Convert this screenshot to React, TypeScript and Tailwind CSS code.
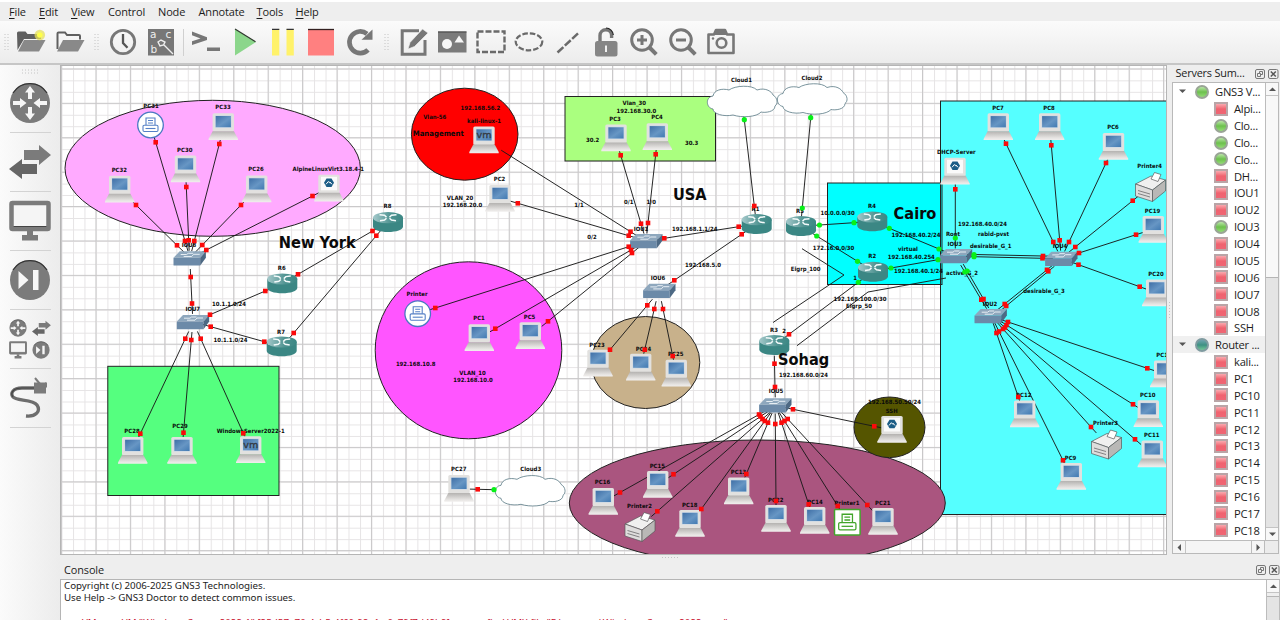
import React from "react";

type P = { x: number; y: number };

/* ---------- Topology data ---------- */
type Kind = "pc" | "vm" | "alpine";
const laptops: [number, number, Kind, string, number, number][] = [
  [119.7, 175.7, "pc", "PC32", 119.3, 172.3],
  [185.5, 155.5, "pc", "PC30", 184.7, 151.7],
  [223.3, 113.2, "pc", "PC33", 223, 108.8],
  [256.7, 175.5, "pc", "PC26", 256, 171.4],
  [329, 174.8, "alpine", "AlpineLinuxVirt3.18.4-1", 328.3, 170.5],
  [484, 126.5, "vm", "kali-linux-1", 484, 122.8],
  [500, 185, "pc", "PC2", 499.5, 180.9],
  [616, 124.5, "pc", "PC3", 615, 121],
  [657.3, 123.3, "pc", "PC4", 657, 119],
  [955, 157.8, "alpine", "DHCP-Server", 956.3, 153.8],
  [998.3, 113.3, "pc", "PC7", 998, 109.6],
  [1049.7, 113.3, "pc", "PC8", 1049, 109.6],
  [1113.5, 133, "pc", "PC6", 1113, 129.2],
  [1153.3, 216, "pc", "PC19", 1152.5, 212.8],
  [1156.7, 279.5, "pc", "PC20", 1156, 275.5],
  [132.7, 437, "pc", "PC28", 132, 432.8],
  [182, 437, "pc", "PC29", 180, 428],
  [250.7, 436.3, "vm", "WindowsServer2022-1", 250.7, 432.8],
  [479.3, 324.2, "pc", "PC1", 479, 320.4],
  [530.3, 322.2, "pc", "PC5", 529.5, 318.7],
  [598, 349.8, "pc", "PC23", 597, 346.7],
  [640.7, 353.8, "pc", "PC24", 643.5, 351],
  [676.3, 359.8, "pc", "PC25", 675.7, 356],
  [459, 475, "pc", "PC27", 458.7, 471],
  [603.3, 488, "pc", "PC16", 602.5, 484.4],
  [657.7, 471, "pc", "PC15", 657.3, 467.5],
  [690, 510, "pc", "PC18", 689.7, 507],
  [738.7, 477.5, "pc", "PC13", 738.5, 474],
  [776, 505, "pc", "PC22", 775.7, 502.3],
  [814.7, 507, "pc", "PC14", 815, 504],
  [883, 508, "pc", "PC21", 882.7, 504.8],
  [892, 416, "alpine", "SSH", 891.7, 413],
  [1024.7, 400.5, "pc", "PC12", 1023.7, 397],
  [1071.3, 463, "pc", "PC9", 1070.5, 459.8],
  [1148.3, 400.3, "pc", "PC10", 1147.7, 396.9],
  [1152.3, 440.5, "pc", "PC11", 1151.7, 437.4],
  [1164.7, 360.5, "pc", "PC17", 1164, 357],
];

const routers: [number, number, string, number, number][] = [
  [388, 222, "R8", 387.5, 207.9],
  [282.3, 283.3, "R6", 281.7, 269.8],
  [281.7, 346.3, "R7", 281, 333.7],
  [756.7, 224, "R1", 755.5, 211],
  [801, 226, "R5", 800, 213],
  [872.3, 221.3, "R4", 872, 208],
  [873, 271.7, "R2", 872.3, 257.6],
  [774.3, 345, "R3", 774, 332],
];

const switches: [number, number, string, number, number][] = [
  [189.7, 258.3, "IOU8", 189, 247.3],
  [193, 322, "IOU7", 192.7, 311.3],
  [646.3, 241, "IOU1", 641, 230.8],
  [659.3, 290.7, "IOU6", 658, 280.2],
  [956, 256, "IOU3", 954.7, 245.7],
  [1061.3, 258.7, "IOU4", 1060, 248],
  [990.7, 316, "IOU2", 990, 305.5],
  [775.3, 405.3, "IOU5", 776, 392.8],
];

type End = "r" | "g" | "";
const links: [number, number, number, number, End, End][] = [
  [155.7, 142.3, 185, 241, "r", "r"],
  [186.3, 187, 188.7, 240.3, "r", "r"],
  [219.3, 144, 194.3, 241, "r", "r"],
  [136, 205, 177, 245.3, "r", "r"],
  [241, 205, 202.3, 245, "r", "r"],
  [312.5, 196, 206.3, 250, "r", "r"],
  [190.7, 277, 192, 303.5, "r", "r"],
  [210, 314.7, 265.3, 291, "r", "r"],
  [210.7, 326.7, 264.3, 341.7, "r", "r"],
  [185.3, 338.7, 140.3, 433.7, "r", "r"],
  [191.3, 340, 183.5, 432.7, "r", "r"],
  [200.7, 338.7, 243.3, 433.3, "r", "r"],
  [298, 274.3, 372.5, 231, "r", "r"],
  [293.7, 333, 376.3, 235.7, "r", "r"],
  [508, 154.5, 630.5, 231.7, "", "r"],
  [517.8, 203.3, 628.7, 235.7, "r", "r"],
  [435.3, 308, 628.7, 246.7, "r", "r"],
  [495.3, 328.7, 631, 250, "r", "r"],
  [548, 321.3, 632, 253, "r", "r"],
  [620.7, 155.3, 641, 223.7, "r", "r"],
  [655.7, 154.3, 648, 223, "r", "r"],
  [664.3, 238.3, 738.7, 226.7, "r", "r"],
  [741.7, 234.3, 674.3, 280.3, "r", "r"],
  [744.3, 119.7, 754.3, 206, "g", "r"],
  [647.3, 305.3, 610, 349.7, "r", "r"],
  [654.3, 309, 644.7, 349.7, "r", "r"],
  [663, 309, 672.7, 356, "r", "r"],
  [810.7, 117.7, 802.3, 208, "g", "g"],
  [819.5, 225, 854, 222.7, "g", "g"],
  [816.7, 236, 857.5, 261.3, "g", "g"],
  [858.3, 282.3, 789, 334.3, "g", "r"],
  [889.3, 228.3, 939, 249, "g", "g"],
  [891, 268, 938, 259.7, "g", "g"],
  [955.3, 189.3, 955.3, 238, "r", "g"],
  [974, 254.5, 1043, 256, "g", "r"],
  [974, 256.7, 1042.5, 258.3, "g", "r"],
  [964.8, 272, 981.3, 299.7, "g", "r"],
  [967.2, 271, 983.5, 299, "g", "r"],
  [1047, 269.8, 1004.7, 304, "r", "r"],
  [1048.3, 271.3, 1006.2, 306, "r", "r"],
  [1006, 143.7, 1053.3, 242, "r", "r"],
  [1051.3, 145.3, 1059.7, 240.3, "r", "r"],
  [1106, 163, 1069, 242, "r", "r"],
  [1132.7, 200.7, 1075.3, 247, "r", "r"],
  [1136, 234.7, 1079, 253, "r", "r"],
  [1139.7, 286.7, 1078.5, 264.7, "r", "r"],
  [1147.3, 368.3, 1008, 322, "r", "r"],
  [1133, 404.3, 1006.5, 325, "r", "r"],
  [1135, 439.3, 1005, 327.5, "r", "r"],
  [1091, 427, 1003, 329, "r", "r"],
  [1063, 460.3, 999, 331.5, "r", "r"],
  [1018.3, 397, 996.5, 333, "r", "r"],
  [774.5, 363.7, 775, 387, "r", "r"],
  [793, 409.3, 874.3, 426.3, "r", "r"],
  [620, 492.5, 759, 414.5, "r", "r"],
  [673.5, 474.3, 760.5, 416.5, "r", "r"],
  [657.3, 511.3, 762.5, 419, "r", "r"],
  [701.3, 509, 764.8, 421, "r", "r"],
  [746.3, 474, 768, 422.7, "r", "r"],
  [776, 501, 775.3, 424, "r", "r"],
  [808.7, 504.3, 781.5, 422.7, "r", "r"],
  [837.7, 506, 784.5, 421, "r", "r"],
  [867.3, 505, 787.7, 419, "r", "r"],
  [477.7, 489.3, 494, 489.7, "r", "g"],
];

const notes: [number, number, string, number?][] = [
  [480.3, 109.8, "192.168.56.2"],
  [434.7, 118.9, "Vlan-56"],
  [438.3, 136, "Management", 7.5],
  [460, 199.7, "VLAN_20"],
  [462.5, 207, "192.168.20.0"],
  [634.3, 105.2, "Vlan_30"],
  [636.3, 112.8, "192.168.30.0"],
  [592.7, 141.7, "30.2"],
  [691.5, 145.3, "30.3"],
  [579, 207, "1/1"],
  [592, 239, "0/2"],
  [628.7, 203.5, "0/1"],
  [651.3, 204.3, "1/0"],
  [694.7, 230.7, "192.168.1.1/24"],
  [703, 267, "192.168.5.0"],
  [741.5, 81.7, "Cloud1"],
  [812, 79.9, "Cloud2"],
  [530.7, 471, "Cloud3"],
  [229, 306.3, "10.1.1.0/24"],
  [230.5, 342, "10.1.1.0/24"],
  [837.7, 215, "10.0.0.0/30"],
  [833.5, 250.3, "172.16.0.0/30"],
  [805.7, 271, "Eigrp_100"],
  [916, 237, "192.168.40.2/24"],
  [908, 251.3, "virtual"],
  [911.3, 258.8, "192.168.40.254"],
  [918.5, 272.7, "192.168.40.1/24"],
  [855, 280.3, "1"],
  [784, 333, "2"],
  [860, 301, "192.168.100.0/30"],
  [859, 308.3, "Eigrp_50"],
  [953, 236, "Root"],
  [993.5, 236, "rabid-pvst"],
  [982.5, 225.7, "192.168.40.0/24"],
  [990.7, 248.3, "desirable_G_1"],
  [962, 274.5, "active_G_2"],
  [1044, 293.3, "desirable_G_3"],
  [803.5, 376.8, "192.168.60.0/24"],
  [894.5, 404, "192.168.50.50/24"],
  [415.7, 366.3, "192.168.10.8"],
  [472.5, 375, "VLAN_10"],
  [473, 382.3, "192.168.10.0"],
  [151, 108.2, "PC31"],
  [417, 296.3, "Printer"],
  [639.5, 508, "Printer2"],
  [847, 505.2, "Printer1"],
  [1149.7, 168, "Printer4"],
  [1105.5, 425.3, "Printer3"],
  [317.3, 247.5, "New York", 15.8],
  [689.8, 200.3, "USA", 15.8],
  [915, 219, "Cairo", 15.8],
  [803.7, 365, "Sohag", 15.8],
];

/* ---------- Canvas drawing parts ---------- */
function Note({ x, y, text, size = 5.8 }: P & { text: string; size?: number }) {
  return (
    <text transform={`translate(${x} ${y}) scale(.925 1)`} textAnchor="middle" fontSize={size} fill="#0a0a0a">
      {text}
    </text>
  );
}

function Laptop({ x, y, kind }: P & { kind: Kind }) {
  return (
    <g transform={`translate(${x} ${y})`}>
      <rect x="-10.7" y="0" width="21.4" height="18.5" rx="1.6" fill="#e2e1df" />
      <path d="M-10.7 18h21.4l4 7.6v1.2h-29.4v-1.2z" fill="url(#base)" />
      {kind === "alpine" ? (
        <>
          <rect x="-8" y="2" width="16" height="13.5" fill="#fafafa" />
          <path d="M-2.5 3.8h5l2.5 4.2-2.5 4.3h-5L-5 8z" fill="#1c5d86" />
          <path d="M-3 9.5 -.6 6.7 1 8.5M.8 7 3 9.5" stroke="#fff" strokeWidth="1" fill="none" />
        </>
      ) : (
        <>
          <rect x="-8.2" y="2.2" width="16.4" height="12.4" fill="#c9d8e6" />
          <rect x="-7.6" y="2.8" width="15.2" height="11.2" fill="url(#screen)" />
        </>
      )}
      {kind === "vm" && (
        <text x="0" y="11.8" textAnchor="middle" fontSize="9.5" fontWeight="400" fill="#333a44" stroke="#333a44" strokeWidth=".35">
          vm
        </text>
      )}
    </g>
  );
}

function Router({ x, y }: P) {
  return (
    <g transform={`translate(${x} ${y})`}>
      <path d="M-15-4.5v9C-15 7.8-8.3 10-0 10s15-2.2 15-5.5v-9z" fill="#3b8784" />
      <ellipse cy="-4.3" rx="15" ry="5.6" fill="url(#rtop)" />
      <path
        d="M-8.5-7.2-3.5-6.7-1.5-4.7M8.500-7.2 3.5-6.7 1.5-4.7M-8-1.2-3.5-2 -1.5-3.8M8-1.2 3.5-2 1.5-3.8"
        stroke="#f4fbfb"
        strokeWidth="1.5"
        fill="none"
      />
    </g>
  );
}

function Switch({ x, y }: P) {
  return (
    <g transform={`translate(${x} ${y})`}>
      <path d="M-16.2-.5-10-7h26.2L10.5-.5z" fill="#8ea7bd" />
      <path d="M-16.2-.5h26.7v7.8h-26.2q-.5 0-.5-.5z" fill="#6c8aa8" />
      <path d="M10.5-.5 16.2-7v6.5L10.5 7.3z" fill="#4d6984" />
      <path d="M-9-3.8h6l1.5-1.2h5M-6-1.8h8l2-2.2h6" stroke="#e7eef4" strokeWidth="1" fill="none" />
    </g>
  );
}

function Cloud({ x, y }: P) {
  return (
    <path
      transform={`translate(${x} ${y})`}
      d="M6 10C7 4 15 2 22 4 28-.5 45-1.5 50 4 59 1 65 6 66 9 71 12 71 18 68 20 68 26 58 27 54 26 50 31 35 32 26 29 17 31 6 28 6 23-1 22-2 11 6 10z"
      fill="#fff"
      stroke="#587984"
      strokeWidth=".8"
    />
  );
}

function PrinterGlyph({ color }: { color: string }) {
  return (
    <g fill="none" stroke={color} strokeWidth="1.1">
      <path d="M-4.5 0v-7h9v7M-2.5-4.5h5M-2.5-2h5" />
      <rect x="-7.5" y=".2" width="15" height="6.3" rx="1.2" />
      <path d="M-5 3.5h10" />
    </g>
  );
}

function LaserPrinter({ x, y }: P) {
  return (
    <g transform={`translate(${x} ${y})`} stroke="#59595a" strokeWidth=".7" strokeLinejoin="round">
      <path d="M.5 12 16 4l14.5 4-13 10z" fill="#f0f0ef" />
      <path d="M.5 12 17.5 18v11.5L.5 24z" fill="#dedddc" />
      <path d="M17.5 18 30.5 8v11l-13 10.5z" fill="#b9b8b6" />
      <path d="M16 7 19.5.5 26 2.5 23 9.5z" fill="#fff" />
      <path d="M3 18.5l12 3.5M3 21.5l12 3.5" fill="none" />
    </g>
  );
}

function Marker({ x, y, t }: P & { t: End }) {
  if (!t) return null;
  return t === "r" ? (
    <rect x={x - 2.3} y={y - 2.3} width="4.6" height="4.6" fill="#fb0a0a" />
  ) : (
    <circle cx={x} cy={y} r="2.6" fill="#08f018" />
  );
}

function Topology() {
  return (
    <svg
      width="1105"
      height="488"
      viewBox="61 66 1105 488"
      className="block font-bold"
      style={{ fontFamily: '"DejaVu Sans", Verdana, sans-serif' }}
    >
      <defs>
        <linearGradient id="base" x1="0" y1="0" x2="0" y2="1">
          <stop offset="0" stopColor="#b4b2b0" />
          <stop offset=".75" stopColor="#e6e4e2" />
          <stop offset="1" stopColor="#f1efee" />
        </linearGradient>
        <linearGradient id="screen" x1="0" y1="0" x2="1" y2="1">
          <stop offset="0" stopColor="#3f6fa6" />
          <stop offset=".55" stopColor="#6796c4" />
          <stop offset="1" stopColor="#427ab2" />
        </linearGradient>
        <linearGradient id="rtop" x1="0" y1="0" x2="1" y2="0">
          <stop offset="0" stopColor="#a5c9cb" />
          <stop offset=".6" stopColor="#4f9391" />
          <stop offset="1" stopColor="#3b8784" />
        </linearGradient>
        <pattern id="minor" x="61.5" y="68.9" width="11.48" height="11.47" patternUnits="userSpaceOnUse">
          <path d="M0 .5H11.48M.5 0V11.47" stroke="#e6e4e5" strokeWidth="1" fill="none" />
        </pattern>
        <pattern id="major" x="61" y="68.4" width="34.44" height="34.41" patternUnits="userSpaceOnUse">
          <path d="M0 .5H34.44M.5 0V34.41" stroke="#c9c8c9" strokeWidth="1" fill="none" />
        </pattern>
      </defs>
      <rect x="61" y="66" width="1105" height="488" fill="#fff" />
      <rect x="61" y="66" width="1105" height="488" fill="url(#minor)" />
      <rect x="61" y="66" width="1105" height="488" fill="url(#major)" />

      <g stroke="#222" strokeWidth="1">
        <ellipse cx="212.7" cy="168.3" rx="147.7" ry="68" fill="#ffaaff" />
        <ellipse cx="464.7" cy="134.2" rx="53.3" ry="46" fill="#ff0000" />
        <rect x="565" y="96.5" width="150.5" height="64.5" fill="#aaff7f" />
        <ellipse cx="468.5" cy="350.3" rx="93.3" ry="88.5" fill="#ff55ff" />
        <ellipse cx="645.5" cy="362.5" rx="54.3" ry="46" fill="#c8b18b" />
        <rect x="940.5" y="101" width="240" height="413.5" fill="#55ffff" />
        <ellipse cx="757.3" cy="503" rx="188" ry="63" fill="#aa557f" />
        <ellipse cx="889.5" cy="427.3" rx="35.5" ry="30.3" fill="#555500" />
        <rect x="827.5" y="183" width="114.5" height="101.5" fill="#00ffff" />
        <path d="M940.5 183V285" />
        <rect x="107.8" y="366.3" width="171.2" height="129.2" fill="#55ff7f" />
      </g>

      <g stroke="#1a1a1a" strokeWidth=".95" fill="none">
        {links.map(([x1, y1, x2, y2], i) => {
          const d = Math.hypot(x2 - x1, y2 - y1);
          const ux = ((x2 - x1) / d) * 8;
          const uy = ((y2 - y1) / d) * 8;
          return <line key={i} x1={x1 - ux} y1={y1 - uy} x2={x2 + ux * 1.3} y2={y2 + uy * 1.3} />;
        })}
        <path d="M802 248.7 844 275 773 322.5M797 345.7 868 292 946 278" />
      </g>

      <Cloud x={707} y={86} />
      <Cloud x={777} y={83.5} />
      <Cloud x={495} y={475.3} />
      {routers.map(([x, y], i) => (
        <Router key={i} x={x} y={y} />
      ))}
      {switches.map(([x, y], i) => (
        <Switch key={i} x={x} y={y} />
      ))}
      {laptops.map(([x, y, kind], i) => (
        <Laptop key={i} x={x} y={y} kind={kind} />
      ))}
      {[
        [150.5, 125],
        [417.7, 313.7],
      ].map(([x, y]) => (
        <g key={x} transform={`translate(${x} ${y})`}>
          <circle r="12.8" fill="#fff" stroke="#4a78c2" strokeWidth="1.3" />
          <PrinterGlyph color="#5580c6" />
        </g>
      ))}
      <g transform="translate(847.3 522.3)">
        <rect x="-12.8" y="-12.8" width="25.6" height="25.6" rx="1" fill="#fff" stroke="#42a52b" strokeWidth="1.5" />
        <g transform="scale(1.15)">
          <PrinterGlyph color="#42a52b" />
        </g>
      </g>
      <LaserPrinter x={624.5} y={512} />
      <LaserPrinter x={1135} y={172} />
      <LaserPrinter x={1091} y={429.5} />

      {laptops.map(([, , , text, x, y], i) => (
        <Note key={i} x={x} y={y} text={text} />
      ))}
      {routers.map(([, , text, x, y], i) => (
        <Note key={i} x={x} y={y} text={text} />
      ))}
      {switches.map(([, , text, x, y], i) => (
        <Note key={i} x={x} y={y} text={text} />
      ))}
      {notes.map(([x, y, text, size], i) => (
        <Note key={i} x={x} y={y} text={text} size={size} />
      ))}
      {links.map(([x1, y1, x2, y2, a, b], i) => (
        <React.Fragment key={i}>
          <Marker x={x1} y={y1} t={a} />
          <Marker x={x2} y={y2} t={b} />
        </React.Fragment>
      ))}
    </svg>
  );
}

/* ---------- Toolbar ---------- */
const G = "#777";

function Tool({ children }: { children: React.ReactNode }) {
  return (
    <div className="flex w-[38.4px] shrink-0 justify-center">
      <svg width="30" height="30" viewBox="0 0 30 30" fill="none">
        {children}
      </svg>
    </div>
  );
}

function Handle({ className }: { className: string }) {
  return (
    <div className={`flex shrink-0 justify-center ${className}`}>
      <svg width="5" height="17" viewBox="0 0 5 17">
        <path d="M1 0v17M4 0v17" stroke="#c4c4c4" strokeWidth="1" strokeDasharray="1 2" />
      </svg>
    </div>
  );
}

function Folder({ fresh }: { fresh?: boolean }) {
  return (
    <>
      {fresh ? (
        <path d="M1 6q0-1.5 1.5-1.5h7l2 2.5h12q1.5 0 1.5 1.5V12H8L1.5 23z" fill="#606060" />
      ) : (
        <path d="M2.5 22V6.5q0-1 1-1H10l2 2.5h12q1 0 1 1V12.5" stroke="#606060" strokeWidth="2" />
      )}
      <path d="M8 13h21.5l-6.5 11.5H2z" fill="#898989" />
      {fresh && (
        <>
          <circle cx="23.8" cy="8" r="5.3" fill="#e5e05a" opacity=".75" />
          <circle cx="23.8" cy="8" r="2.8" fill="#ffff4a" />
        </>
      )}
    </>
  );
}

function Magnifier({ plus }: { plus?: boolean }) {
  return (
    <>
      <circle cx="13" cy="13" r="10.3" stroke={G} strokeWidth="3" />
      <path d="M20 20l7.3 7.3" stroke={G} strokeWidth="4" />
      <path d={plus ? "M8 13h10M13 8v10" : "M8 13h10"} stroke={G} strokeWidth="3" />
    </>
  );
}

function Toolbar() {
  return (
    <div className="flex h-[42px] shrink-0 items-center bg-gradient-to-b from-[#fbfbfb] to-[#ececec]">
      <Handle className="w-[12px]" />
      <Tool><Folder fresh /></Tool>
      <Tool><Folder /></Tool>
      <Handle className="w-[14.7px]" />
      <Tool>
        <circle cx="15" cy="15" r="11.7" stroke={G} strokeWidth="2.8" />
        <path d="M15 7v9l4.5 4.8" stroke="#555" strokeWidth="2.3" />
      </Tool>
      <Tool>
        <rect x="2" y="2" width="26" height="26.5" fill={G} />
        <g fill="#eee" fontFamily="DejaVu Sans, sans-serif" fontSize="10.5">
          <text x="4" y="11">a</text>
          <text x="19.500" y="11">c</text>
          <text x="4.500" y="26">b</text>
        </g>
        <path d="M12 15l3-2 4 2-1.5 3-3.5 1zM18 18l9 9" stroke="#eee" strokeWidth="1.4" />
      </Tool>
      <div className="flex w-[6.7px] shrink-0 justify-center">
        <div className="h-[27px] w-px bg-[#d0d0d0]" />
      </div>
      <Tool>
        <path d="M1 4.5l15 5.8v2.7L1 18v-3.8l8.5-2.7L1 8.3zM16 20.5h13v3.5H16z" fill={G} />
      </Tool>
      <Tool>
        <path d="M5 2l21 13L5 28.5z" fill="#8bd68b" />
        <path d="M5 2l20.5 12.8" stroke="#30382f" strokeWidth="1.2" />
      </Tool>
      <Tool>
        <path d="M4 2h7.3v26.5H4zM18.5 2h7.3v26.5h-7.3z" fill="#fff26a" />
        <path d="M4 2.3h7.3M18.5 2.3h7.3" stroke="#333" strokeWidth="1.2" />
      </Tool>
      <Tool>
        <rect x="2" y="2" width="26" height="26.5" fill="#ff8080" />
        <path d="M2 2.5h26" stroke="#332020" strokeWidth="1.3" />
      </Tool>
      <Tool>
        <path d="M23 22.8A10.8 10.8 0 1 1 22 6.8" stroke={G} strokeWidth="4.7" />
        <path d="M27.5 2.5v10.3H16.5z" fill={G} />
      </Tool>
      <Handle className="w-[16px]" />
      <Tool>
        <path d="M20 3.7H3.2v23.6H26V13" stroke={G} strokeWidth="3" />
        <path d="M23.5 2l5.5 4-13.5 13.5-6.5 2.5 2-6.5z" fill={G} stroke="#f5f5f5" strokeWidth=".6" />
      </Tool>
      <Tool>
        <rect x="1" y="4.5" width="28.5" height="21" fill="#7b7b7b" />
        <path d="M1 5h28.5" stroke="#444" />
        <circle cx="10" cy="17" r="5" fill="#f6f6f6" />
        <path d="M22 8.5l5 7H17.5z" fill="#f6f6f6" />
      </Tool>
      <Tool>
        <rect x="1.500" y="4.500" width="27" height="20.5" stroke="#6a6a6a" strokeWidth="2.4" strokeDasharray="6 2" />
      </Tool>
      <Tool>
        <ellipse cx="15" cy="14.800" rx="13.3" ry="8.5" stroke="#6a6a6a" strokeWidth="2.200" strokeDasharray="5.500 2" />
      </Tool>
      <Tool>
        <path d="M4.5 25.5L26 5.5" stroke="#6a6a6a" strokeWidth="2.5" strokeDasharray="8 2" />
      </Tool>
      <Tool>
        <path d="M9 15V8.5a5.8 5.8 0 0 1 11.6 0V11" stroke={G} strokeWidth="3.4" />
        <path d="M15 1a7.5 7.5 0 0 1 7.3 7" stroke="#222" strokeWidth="1.2" />
        <rect x="4" y="14" width="22.5" height="15.5" rx="2.5" fill="#858585" />
        <path d="M15 18.5v6.5" stroke="#f0f0f0" strokeWidth="2" />
      </Tool>
      <Tool><Magnifier plus /></Tool>
      <Tool><Magnifier /></Tool>
      <Tool>
        <path d="M2.5 7.5H8l2-4.5h9l2 4.5h6.5v18.5h-25z" stroke={G} strokeWidth="2.6" strokeLinejoin="round" />
        <path d="M9 4h11v4H9z" fill={G} />
        <circle cx="15.5" cy="16" r="4.8" stroke={G} strokeWidth="2.6" />
        <circle cx="7" cy="11.5" r="1.2" fill={G} />
      </Tool>
    </div>
  );
}

/* ---------- Device dock on the left ---------- */
function RouterMark() {
  return (
    <>
      <circle cx="21" cy="21" r="20" fill="#7b7b7b" />
      <path
        d="M21 4l5 6.5h-3V17h-4v-6.5h-3zM21 38l5-6.5h-3V25h-4v6.5h-3zM17.5 21L11 26v-3H4v-4h7v-3zM24.5 21l6.5 5v-3h7v-4h-7v-3z"
        fill="#f6f6f6"
      />
      <path d="M4 11A20 20 0 0 1 38 11" stroke="#333" strokeWidth="1.200" />
    </>
  );
}
function ArrowsMark() {
  return (
    <>
      <path d="M15 9h15V4l12 10-12 10v-5H15z" fill="#7b7b7b" />
      <path d="M28 23H13v-5L0 28l13 10v-5h15z" fill="#666" />
    </>
  );
}
function MonitorMark() {
  return (
    <>
      <rect x="2.5" y="3" width="37" height="26" rx="1" fill="#f5f5f5" stroke="#7b7b7b" strokeWidth="4.5" />
      <path d="M4.5 26.5h33" stroke="#444" strokeWidth="1.2" />
      <path d="M18 31h6v4h5v5.5H13V35h5z" fill="#7b7b7b" />
    </>
  );
}
function SkipMark() {
  return (
    <>
      <circle cx="21" cy="21" r="20" fill="#7b7b7b" />
      <path d="M9.5 12l10 9-10 9zM24 11h5.5v20H24z" fill="#f6f6f6" />
      <path d="M4 11A20 20 0 0 1 38 11" stroke="#333" strokeWidth="1.200" />
    </>
  );
}

function Dock({ children }: { children: React.ReactNode }) {
  return (
    <div className="flex h-[59px] w-[41px] shrink-0 items-center justify-center border-b border-[#d3d3d3]">
      <svg width="42" height="42" viewBox="0 0 42 42" fill="none" className="shrink-0">
        {children}
      </svg>
    </div>
  );
}

function LeftDock() {
  return (
    <div className="flex w-[60px] shrink-0 flex-col items-center bg-gradient-to-r from-[#fbfbfb] to-[#ececec]">
      <div className="flex h-[8.5px] shrink-0 items-end">
        <svg width="17" height="5" viewBox="0 0 17 5">
          <path d="M0 1h17M0 4h17" stroke="#c4c4c4" strokeDasharray="1 2" />
        </svg>
      </div>
      <Dock><RouterMark /></Dock>
      <Dock><ArrowsMark /></Dock>
      <Dock><MonitorMark /></Dock>
      <Dock><SkipMark /></Dock>
      <Dock>
        <g transform="translate(0 1) scale(.43)"><RouterMark /></g>
        <g transform="translate(23 1) scale(.45)"><ArrowsMark /></g>
        <g transform="translate(0 23) scale(.43)"><MonitorMark /></g>
        <g transform="translate(23 23) scale(.43)"><SkipMark /></g>
      </Dock>
      <Dock>
        <path d="M25 11H13C4 11 1 16 4 20s20 2 24 8-1 12-11 11" stroke="#6d6d6d" strokeWidth="3.3" />
        <path d="M25 11H13C4 11 1 16 4 20" stroke="#444" strokeWidth="1.2" />
        <path d="M25 5.5h12v11H25z" fill="#7b7b7b" />
        <path d="M26 1l5 6M37 5.5v5" stroke="#7b7b7b" strokeWidth="2" />
      </Dock>
    </div>
  );
}

/* ---------- Panels ---------- */
function PanelButtons() {
  return (
    <svg width="24" height="10" viewBox="0 0 24 10" fill="none" stroke="#777" strokeWidth="1">
      <rect x=".5" y=".5" width="9" height="9" rx="1.5" />
      <path d="M2.5 4.5h3v3h-3zM4.5 4V2.5h3v3H6" />
      <rect x="13.5" y=".5" width="9.5" height="9" rx="1.5" />
      <path d="M15.8 2.5l5 5M20.8 2.5l-5 5" stroke="#555" strokeWidth="1.5" />
    </svg>
  );
}

function Arrow({ dir }: { dir: "up" | "down" | "left" | "right" }) {
  const d = {
    up: "M0 5l3.5-3.5L7 5z",
    down: "M0 1.5h7L3.5 5z",
    left: "M5 0v7L1.5 3.5z",
    right: "M1.5 0v7L5 3.5z",
  }[dir];
  return (
    <svg width="7" height="7" viewBox="0 0 7 7" className="shrink-0">
      <path d={d} fill="#555" />
    </svg>
  );
}

const rows: [string, "g" | "r"][] = [
  ["Alpi...", "r"], ["Clo...", "g"], ["Clo...", "g"], ["Clo...", "g"], ["DH...", "r"],
  ["IOU1", "r"], ["IOU2", "r"], ["IOU3", "g"], ["IOU4", "r"], ["IOU5", "r"],
  ["IOU6", "r"], ["IOU7", "r"], ["IOU8", "r"], ["SSH", "r"],
];
const rows2 = ["kali...", "PC1", "PC10", "PC11", "PC12", "PC13", "PC14", "PC15", "PC16", "PC17", "PC18", ""];

function Led({ t }: { t: "g" | "r" | "t" }) {
  if (t === "r")
    return (
      <div className="h-[14px] w-[14px] shrink-0 border-2 border-[#b9a5a7] bg-gradient-to-b from-[#f9a8af] via-[#f0626f] to-[#ef6674]" />
    );
  return t === "g" ? (
    <div className="h-[14px] w-[14px] shrink-0 rounded-full border-2 border-[#9aa596] bg-gradient-to-b from-[#b9e6a5] via-[#6cc04c] to-[#93dc75]" />
  ) : (
    <div className="h-[14px] w-[14px] shrink-0 rounded-full border-2 border-[#7f9ba0] bg-gradient-to-b from-[#6fa5b0] via-[#3e9183] to-[#74c996]" />
  );
}

function Group({ t, text, shade }: { t: "g" | "t"; text: string; shade?: boolean }) {
  return (
    <div className={`flex h-[16.87px] shrink-0 items-center pl-[6px] ${shade ? "bg-[#f0f0f0]" : ""}`}>
      <Arrow dir="down" />
      <div className="ml-[9px] flex w-[20px]"><Led t={t} /></div>
      <span className="whitespace-nowrap">{text}</span>
    </div>
  );
}

function Leaf({ t, text }: { t: "g" | "r"; text: string }) {
  return (
    <div className="flex h-[16.87px] shrink-0 items-center pl-[41px]">
      <div className="flex w-[20px]"><Led t={t} /></div>
      <span className="whitespace-nowrap">{text}</span>
    </div>
  );
}

function Servers() {
  return (
    <div className="flex w-[107px] shrink-0 flex-col">
      <div className="flex h-[17px] shrink-0 items-center justify-between pl-[3.500px]">
        <span className="text-[10.9px] tracking-[-0.2px]">Servers Sum...</span>
        <PanelButtons />
      </div>
      <div className="flex h-[472px] flex-col border border-[#b9b9b9] bg-white">
        <div className="flex min-h-0 flex-1">
          <div className="flex min-w-0 flex-1 flex-col overflow-hidden pt-[0.500px] text-[11.2px] leading-none tracking-[-0.25px]">
            <Group t="g" text="GNS3 V..." />
            {rows.map(([s, t], i) => (
              <Leaf key={i} t={t} text={s} />
            ))}
            <Group t="t" text="Router ..." shade />
            {rows2.map((s, i) => (
              <Leaf key={i} t="r" text={s} />
            ))}
          </div>
          <div className="flex w-[13px] shrink-0 flex-col border-l border-[#bcbcbc] bg-[#e4e4e4]">
            <div className="flex h-[13px] items-center justify-center border-b border-[#c4c4c4] bg-[#f8f8f8]"><Arrow dir="up" /></div>
            <div className="h-[182px] border-b border-[#b5b5b5] bg-[#f8f8f8]" />
            <div className="flex-1" />
            <div className="flex h-[13px] items-center justify-center border-t border-[#c4c4c4] bg-[#f8f8f8]"><Arrow dir="down" /></div>
          </div>
        </div>
        <div className="flex h-[13px] shrink-0 border-t border-[#bcbcbc] bg-[#f5f5f5]">
          <div className="flex w-[13px] items-center justify-center border-r border-[#c4c4c4]"><Arrow dir="left" /></div>
          <div className="flex-1" />
          <div className="flex w-[14px] items-center justify-center border-x border-[#bcbcbc]"><Arrow dir="right" /></div>
          <div className="w-[13px] bg-[#ececec]" />
        </div>
      </div>
    </div>
  );
}

const menus: [string, string, string][] = [
  ["F", "ile", "w-[30px]"],
  ["E", "dit", "w-[32px]"],
  ["V", "iew", "w-[37px]"],
  ["", "Control", "w-[50px]"],
  ["", "Node", "w-[40.5px]"],
  ["", "Annotate", "w-[58px]"],
  ["T", "ools", "w-[39px]"],
  ["H", "elp", "w-[40px]"],
];

export default function App() {
  return (
    <div className="flex h-[620px] w-[1280px] flex-col overflow-hidden bg-[#eeeeee] font-['Open_Sans','Noto_Sans',sans-serif] text-[#1c1c1c]">
      <div className="flex h-[21px] shrink-0 items-start border-t-2 border-white pl-[9px] pt-[4px] text-[11px] leading-[11px] tracking-[-0.15px]">
        {menus.map(([u, rest, w]) => (
          <div key={rest} className={`shrink-0 whitespace-nowrap ${w}`}>
            <span className="underline underline-offset-2">{u}</span>
            {rest}
          </div>
        ))}
      </div>
      <Toolbar />
      <div className="flex min-h-0 flex-1 border-t-2 border-[#c6c6c6]">
        <LeftDock />
        <div className="flex min-w-0 flex-1 flex-col">
          <div className="flex h-[490px] shrink-0">
            <div className="h-[490px] w-[1107px] shrink-0 border border-[#b5b5b5]">
              <Topology />
            </div>
            <div className="flex w-[5px] shrink-0 items-center justify-center">
              <svg width="3" height="17" viewBox="0 0 3 17">
                <path d="M1.5 0v17" stroke="#c4c4c4" strokeDasharray="1 2" />
              </svg>
            </div>
            <Servers />
          </div>
          <div className="flex h-[5px] shrink-0 items-center justify-center">
            <svg width="17" height="3" viewBox="0 0 17 3">
              <path d="M0 1.5h17" stroke="#c4c4c4" strokeDasharray="1 2" />
            </svg>
          </div>
          <div className="flex h-[19px] shrink-0 items-center justify-between pl-1">
            <span className="pt-[2px] text-[10.9px] leading-none tracking-[-0.1px]">Console</span>
            <PanelButtons />
          </div>
          <div className="flex min-h-0 flex-1 border-l border-t border-[#b5b5b5] bg-white">
            <div className="flex-1 overflow-hidden whitespace-pre pl-[3px] font-['Noto_Sans','Open_Sans',sans-serif] text-[9.75px] leading-[12.3px]">
              <div>Copyright (c) 2006-2025 GNS3 Technologies.</div>
              <div className="tracking-[-0.05px]">Use Help -&gt; GNS3 Doctor to detect common issues.</div>
              <div className="pl-[18px] pt-[12px] tracking-[0.02px] text-[#c8102e]">
                VMware VM "Windows Server 2022-1" [25d57e70-4cb5-4f60-98a1-c0c79f7d49b9] cannot find VMX file "E:\vmware\Windows Server 2022.vmx"
              </div>
            </div>
            <div className="w-[14px] shrink-0 border-x border-[#bcbcbc] bg-white">
              <div className="flex h-[13px] items-center justify-center border-b border-[#c4c4c4] bg-[#f8f8f8]"><Arrow dir="up" /></div>
              <div className="h-[4px] border-b border-[#b5b5b5] bg-[#eee]" />
              <div className="h-full bg-[#e4e4e4]" />
            </div>
          </div>
        </div>
      </div>
    </div>
  );
}
